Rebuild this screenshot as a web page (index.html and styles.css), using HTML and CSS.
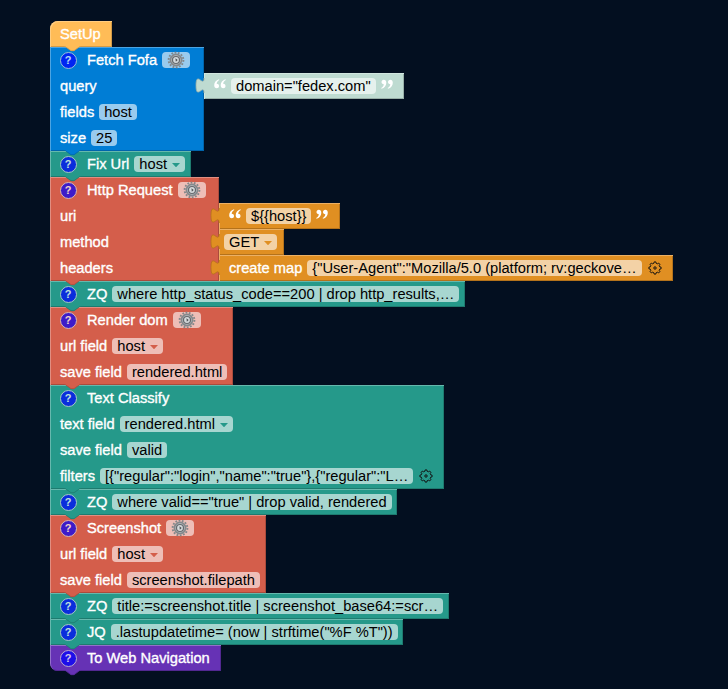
FILE: index.html
```html
<!DOCTYPE html>
<html lang="en">
<head>
<meta charset="utf-8">
<title>Workflow blocks</title>
<link rel="stylesheet" href="styles.css">
</head>
<body>
<svg class="defs" width="0" height="0" aria-hidden="true">
  <symbol id="notch" viewBox="0 0 17 6"><path class="fill" d="M0 0H17L15.500 .5L10 5H7L1.500 .5z"/><path class="edge" d="M1.500 .8L7 4.700H10L15.500 .8"/></symbol>
  <symbol id="plug" viewBox="0 0 10 17"><path class="fill" d="M10 1H9C9 11 1 -7 1 8.500S9 6 9 16H10z"/><path class="edge" d="M9 1C9 11 1 -7 1 8.500S9 6 9 16"/></symbol>
  <symbol id="arrow" viewBox="0 0 8 4"><path d="M0 0H8L4.500 3.700Q4 4.100 3.500 3.700z" fill="currentColor"/></symbol>
  <symbol id="quote" viewBox="0 0 12 10"><path d="M5 .2C2 1.100 .2 3.400 .2 6.300C.2 8.200 1.200 9.300 2.700 9.300C4.100 9.300 5 8.300 5 7C5 5.700 4.100 4.800 2.700 4.800C2.700 3.300 3.600 1.900 5.300 1z"/><path d="M11.500 .2C8.500 1.100 6.700 3.400 6.700 6.300C6.700 8.200 7.700 9.300 9.200 9.300C10.600 9.300 11.500 8.300 11.500 7C11.500 5.700 10.600 4.800 9.200 4.800C9.200 3.300 10.100 1.900 11.800 1z"/></symbol>
  <symbol id="gear" viewBox="0 0 18 18">
    <circle cx="9" cy="9" r="7.400" fill="none" stroke="#83888b" stroke-width="1.900" stroke-dasharray="1.800 1.521"/>
    <circle cx="9" cy="9" r="5.600" fill="#b9bec1" stroke="#85898c" stroke-width="1.700"/>
    <circle cx="9" cy="9" r="3.500" fill="#d5dadc" stroke="#65696d" stroke-width="1.200"/>
    <path d="M8.500 7.300L10.700 9L8.800 10.700z" fill="#4d5155"/>
  </symbol>
  <symbol id="cog" viewBox="0 0 14 14"><path fill="none" stroke="#111" stroke-width="1" stroke-linejoin="round" d="M5.800 2.300L6.200 .9H7.800L8.200 2.300L9.400 2.800L10.700 2.100L11.900 3.300L11.200 4.600L11.700 5.800L13.100 6.200V7.800L11.700 8.200L11.200 9.400L11.900 10.700L10.700 11.900L9.400 11.200L8.200 11.700L7.800 13.100H6.200L5.800 11.700L4.600 11.200L3.300 11.900L2.100 10.700L2.800 9.400L2.300 8.200L.9 7.800V6.200L2.300 5.800L2.800 4.600L2.100 3.300L3.300 2.100L4.600 2.800z"/><circle cx="7" cy="7" r="1.200" fill="none" stroke="#111" stroke-width="1"/></symbol>
</svg>
<main class="stack">
  <section class="block yellow first w-setup"><div class="row"><span class="label">SetUp</span></div><svg class="notch"><use href="#notch"/></svg></section>

  <section class="block blue w-fofa">
    <div class="row"><span class="help">?</span><span class="label">Fetch Fofa</span><span class="field gear"><svg><use href="#gear"/></svg></span></div>
    <div class="row input"><span class="label">query</span>
      <div class="value mint w-domain"><svg class="plug"><use href="#plug"/></svg><svg class="quote"><use href="#quote"/></svg><span class="field">domain="fedex.com"</span><svg class="quote close"><use href="#quote"/></svg></div></div>
    <div class="row"><span class="label">fields</span><span class="field">host</span></div>
    <div class="row"><span class="label">size</span><span class="field">25</span></div>
    <svg class="notch"><use href="#notch"/></svg>
  </section>

  <section class="block teal w-fix"><div class="row"><span class="help">?</span><span class="label">Fix Url</span><span class="field">host<svg class="arrow"><use href="#arrow"/></svg></span></div><svg class="notch"><use href="#notch"/></svg></section>

  <section class="block red w-http">
    <div class="row"><span class="help">?</span><span class="label">Http Request</span><span class="field gear"><svg><use href="#gear"/></svg></span></div>
    <div class="row input"><span class="label">uri</span>
      <div class="value orange w-uri"><svg class="plug"><use href="#plug"/></svg><svg class="quote"><use href="#quote"/></svg><span class="field">${{host}}</span><svg class="quote close"><use href="#quote"/></svg></div></div>
    <div class="row input"><span class="label">method</span>
      <div class="value orange w-get"><svg class="plug"><use href="#plug"/></svg><span class="field">GET<svg class="arrow"><use href="#arrow"/></svg></span></div></div>
    <div class="row input"><span class="label">headers</span>
      <div class="value orange w-map"><svg class="plug"><use href="#plug"/></svg><span class="label">create map</span><span class="field">{"User-Agent":"Mozilla/5.0 (platform; rv:geckove…</span><svg class="cog"><use href="#cog"/></svg></div></div>
    <svg class="notch"><use href="#notch"/></svg>
  </section>

  <section class="block teal w-zq1"><div class="row"><span class="help">?</span><span class="label">ZQ</span><span class="field">where http_status_code==200 | drop http_results,…</span></div><svg class="notch"><use href="#notch"/></svg></section>

  <section class="block red w-render">
    <div class="row"><span class="help">?</span><span class="label">Render dom</span><span class="field gear"><svg><use href="#gear"/></svg></span></div>
    <div class="row"><span class="label">url field</span><span class="field">host<svg class="arrow"><use href="#arrow"/></svg></span></div>
    <div class="row"><span class="label">save field</span><span class="field">rendered.html</span></div>
    <svg class="notch"><use href="#notch"/></svg>
  </section>

  <section class="block teal w-classify">
    <div class="row"><span class="help">?</span><span class="label">Text Classify</span></div>
    <div class="row"><span class="label">text field</span><span class="field">rendered.html<svg class="arrow"><use href="#arrow"/></svg></span></div>
    <div class="row"><span class="label">save field</span><span class="field">valid</span></div>
    <div class="row"><span class="label">filters</span><span class="field">[{"regular":"login","name":"true"},{"regular":"L…</span><svg class="cog"><use href="#cog"/></svg></div>
    <svg class="notch"><use href="#notch"/></svg>
  </section>

  <section class="block teal w-zq2"><div class="row"><span class="help">?</span><span class="label">ZQ</span><span class="field">where valid=="true" | drop valid, rendered</span></div><svg class="notch"><use href="#notch"/></svg></section>

  <section class="block red w-shot">
    <div class="row"><span class="help">?</span><span class="label">Screenshot</span><span class="field gear"><svg><use href="#gear"/></svg></span></div>
    <div class="row"><span class="label">url field</span><span class="field">host<svg class="arrow"><use href="#arrow"/></svg></span></div>
    <div class="row"><span class="label">save field</span><span class="field">screenshot.filepath</span></div>
    <svg class="notch"><use href="#notch"/></svg>
  </section>

  <section class="block teal w-zq3"><div class="row"><span class="help">?</span><span class="label">ZQ</span><span class="field">title:=screenshot.title | screenshot_base64:=scr…</span></div><svg class="notch"><use href="#notch"/></svg></section>
  <section class="block teal w-jq"><div class="row"><span class="help">?</span><span class="label">JQ</span><span class="field">.lastupdatetime= (now | strftime("%F %T"))</span></div><svg class="notch"><use href="#notch"/></svg></section>
  <section class="block purple last w-nav"><div class="row"><span class="help">?</span><span class="label">To Web Navigation</span></div><svg class="notch"><use href="#notch"/></svg></section>
</main>
</body>
</html>
```
FILE: styles.css
```css
* { box-sizing: border-box; }
body {
  margin: 0;
  min-height: 689px;
  background: #030f20;
  font: 14.667px/16px "Liberation Sans", Arial, sans-serif;
  color: #000;
  overflow: hidden;
}
.defs { position: absolute; }
.stack { padding: 21px 0 0 50px; }

.block, .value {
  position: relative;
  background: var(--c);
  box-shadow: inset 1px 1px 0 var(--hi), inset -1px -1px 0 var(--lo);
}
.yellow { --c: #ffbc57; --hi: #ffcd81; --lo: #d29a48; }
.blue { --c: #007dd5; --hi: #4ca4e2; --lo: #0065ac; }
.teal { --c: #25998a; --hi: #66b8ad; --lo: #1e7b6f; }
.red { --c: #d45e4b; --hi: #e18e81; --lo: #aa4b3c; }
.orange { --c: #e08f22; --hi: #ecb064; --lo: #b4721b; }
.mint { --c: #bedbd1; --hi: #d1e6df; --lo: #98afa7; }
.purple { --c: #6632b5; --hi: #9470cb; --lo: #522891; }
.first { border-top-left-radius: 8px; }
.last { border-bottom-left-radius: 8px; }

.row { display: flex; align-items: center; gap: 5px; height: 26px; padding-left: 10px; white-space: nowrap; }
.label { color: #fff; -webkit-text-stroke: .35px #fff; }
.help {
  flex: none;
  width: 17px;
  height: 17px;
  margin: 0 5.500px 0 -.5px;
  border: 1px solid #ddd;
  border-radius: 50%;
  background: #00f;
  color: #fff;
  font-size: 11px;
  font-weight: bold;
  line-height: 15px;
  text-align: center;
  opacity: .7;
}
.field {
  display: flex;
  align-items: center;
  flex: none;
  height: 16px;
  padding: 0 5px;
  border-radius: 4px;
  background: rgba(255, 255, 255, .6);
}
.gear { width: 28px; }
.gear svg { flex: none; width: 18px; height: 18px; }
.arrow { width: 8px; height: 4px; margin: 2px 0 0 5px; color: var(--c); }
.cog { flex: none; width: 14px; height: 14px; margin-left: 1px; }

.input .label:first-child { flex: 1; }
.value { display: flex; align-items: center; flex: none; gap: 5px; height: 26px; padding-left: 10px; }
.input > .value { margin-right: calc(-1 * var(--w)); width: var(--w); }
.quote { flex: none; width: 12px; height: 10px; margin-top: -5px; fill: #fff; }
.close { transform: rotate(180deg); }
.w-get { padding-left: 5px; }

.notch { position: absolute; z-index: 2; left: 14px; bottom: -5px; width: 17px; height: 6px; }
.plug { position: absolute; left: -9px; top: 4px; width: 10px; height: 17px; }
.fill { fill: var(--c); }
.edge { fill: none; stroke: var(--lo); stroke-width: .8; }

.w-setup { width: 61.5px; }
.w-fofa { width: 154px; }
.w-domain { --w: 200px; }
.w-fix { width: 141px; }
.w-http { width: 169px; }
.w-uri { --w: 121px; }
.w-get { --w: 65px; }
.w-map { --w: 454px; }
.w-zq1 { width: 415px; }
.w-render { width: 183px; }
.w-classify { width: 394px; }
.w-zq2 { width: 347px; }
.w-shot { width: 216px; }
.w-zq3 { width: 399px; }
.w-jq { width: 353px; }
.w-nav { width: 170.500px; }
```
